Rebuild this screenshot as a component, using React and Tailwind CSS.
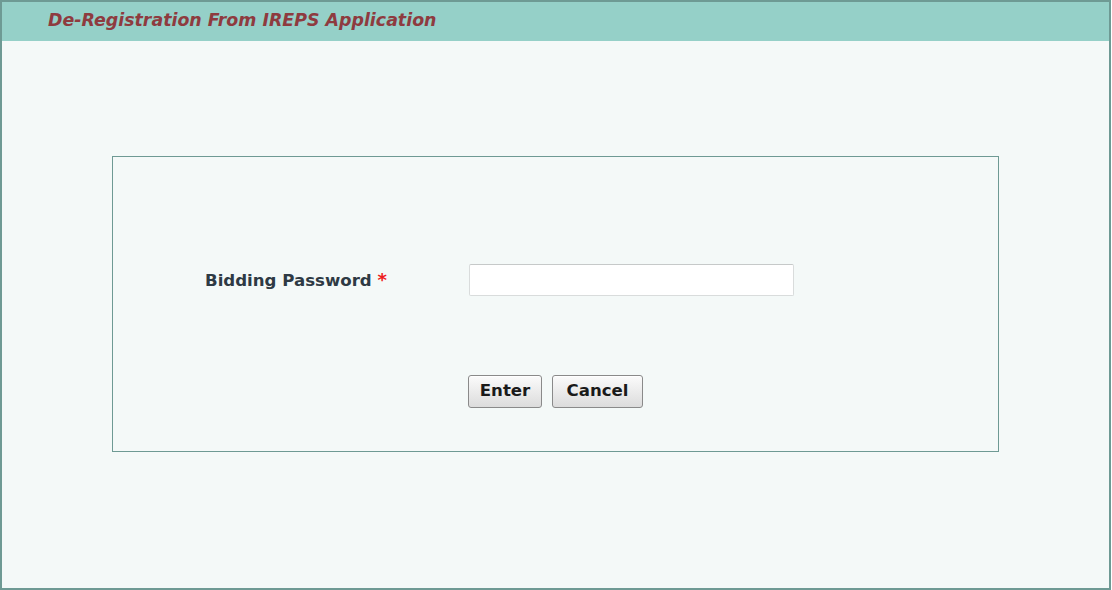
import React from 'react';

function App() {
  return (
    <div
      className="w-[1111px] h-[590px] bg-[#f4f9f8] border-2 border-[#6e9a94] flex flex-col"
      style={{ fontFamily: '"DejaVu Sans", Verdana, sans-serif' }}
    >
      <div className="h-[39px] bg-[#95d0c8] flex items-center pl-[46px]">
        <h1 className="text-[17.4px] font-bold italic text-[#8e3b3f] leading-none pb-[2px]">
          De-Registration From IREPS Application
        </h1>
      </div>
      <div className="pl-[110px] pt-[115px]">
        <div className="w-[887px] h-[296px] border-[1.5px] border-[#6e9a94] flex flex-col">
          <div className="flex items-center pt-[107px] pl-[92px]">
            <label className="w-[264px] text-[16.6px] font-bold text-[#2e3a44]">
              Bidding Password <span className="text-[#ee1c1c] text-[18px]">*</span>
            </label>
            <input
              type="password"
              className="w-[325px] h-[32px] bg-white border border-[#d9dcdc] border-t-[#c6c9c9] rounded-[2px] outline-none"
            />
          </div>
          <div className="flex justify-center gap-[10px] pt-[79px]">
            <button className="w-[74px] h-[33px] rounded-[3px] border border-[#8a8a8a] bg-gradient-to-b from-[#fbfbfb] to-[#dcdcdc] text-[16.6px] font-bold text-[#1a1a1a] shadow-[inset_0_1px_0_#fff]">
              Enter
            </button>
            <button className="w-[91px] h-[33px] rounded-[3px] border border-[#8a8a8a] bg-gradient-to-b from-[#fbfbfb] to-[#dcdcdc] text-[16.6px] font-bold text-[#1a1a1a] shadow-[inset_0_1px_0_#fff]">
              Cancel
            </button>
          </div>
        </div>
      </div>
    </div>
  );
}

export default App;
